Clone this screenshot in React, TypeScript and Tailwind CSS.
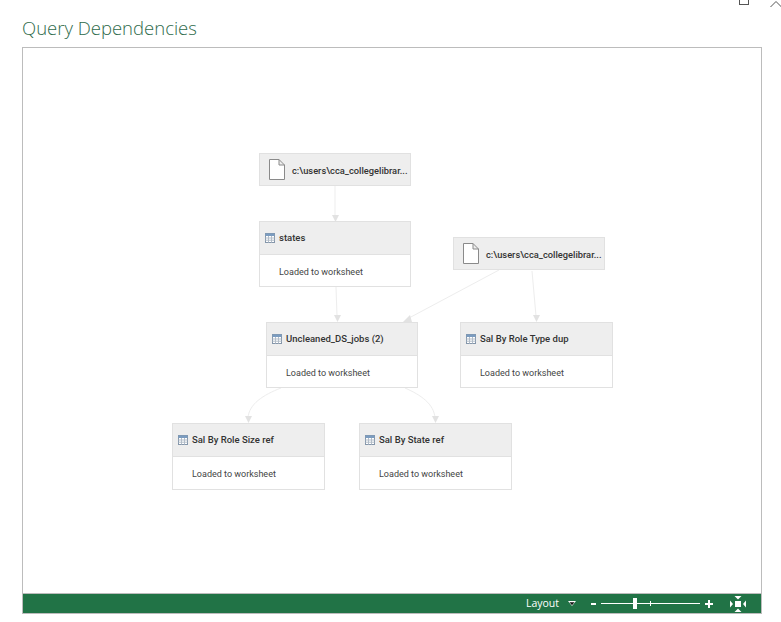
const font = { fontFamily: '"Open Sans", "Noto Sans", sans-serif' }
const nodeFont = { fontFamily: 'Roboto, "Open Sans", sans-serif' }

function TableIcon() {
  return (
    <svg width="10" height="10" viewBox="0 0 10 10" className="shrink-0">
      <rect x="0.5" y="0.5" width="9" height="9" fill="#fff" stroke="#8496aa" />
      <rect x="0.5" y="0.5" width="9" height="2.5" fill="#7b9cc0" />
      <path d="M3.5 3v6.5M6.5 3v6.5M0.5 5h9M0.5 7.2h9" stroke="#b3bdc9" strokeWidth="1" fill="none" />
    </svg>
  )
}

function FileIcon() {
  return (
    <svg width="16" height="21" viewBox="0 0 16 21" className="shrink-0">
      <path d="M0.5 0.5H10L15.5 6V20.5H0.5Z M10 0.5V6H15.5" fill="#fff" stroke="#8a8a8a" />
    </svg>
  )
}

function FileNode({ className }: { className: string }) {
  return (
    <div style={nodeFont} className={`absolute w-[152px] h-[33px] bg-[#eeeeee] border border-[#e1e1e1] flex items-center pl-[9px] ${className}`}>
      <FileIcon />
      <span className="ml-[7px] pt-[2px] text-[9.3px] font-medium text-[#333] whitespace-nowrap">c:\users\cca_collegelibrar...</span>
    </div>
  )
}

function QueryNode({ name, className, bodyClass }: { name: string; className: string; bodyClass: string }) {
  return (
    <div style={nodeFont} className={`absolute bg-white border border-[#e1e1e1] flex flex-col ${className}`}>
      <div className="h-[33px] bg-[#eeeeee] border-b border-[#e1e1e1] flex items-center pl-[5px] shrink-0">
        <TableIcon />
        <span className="ml-[4px] text-[9.5px] font-medium text-[#333] whitespace-nowrap">{name}</span>
      </div>
      <div className={`flex-1 flex items-center pl-[19px] text-[9px] text-[#444] ${bodyClass}`}>Loaded to worksheet</div>
    </div>
  )
}

function Edges() {
  return (
    <svg width="738" height="545" className="absolute left-0 top-0" fill="none" stroke="#ededed" strokeWidth="1">
      {/* lines, in canvas coordinates */}
      <path d="M312 138V168" />
      <path d="M313 239L314 268" />
      <path d="M476 222L386 270" />
      <path d="M509 223L513 268" />
      <path d="M258 340C240 347 226 356 225 370" />
      <path d="M382 340C398 347 411 356 412 370" />
      <g fill="#e2e2e2" stroke="none">
        <path d="M309 167H316L312.500 174Z" />
        <path d="M311 267H318L314.500 274Z" />
        <path d="M380 274L387 267L389 274Z" />
        <path d="M510 267H517L513.500 274Z" />
        <path d="M222 368H229L225.500 375Z" />
        <path d="M409 368H416L412.500 375Z" />
      </g>
    </svg>
  )
}

function FitIcon() {
  return (
    <svg width="18" height="16" viewBox="0 0 18 16" fill="#fff">
      <rect x="6" y="5" width="6" height="6" />
      <path d="M5.500 0H12.500L9 3.500Z M5.500 16H12.500L9 12.500Z M1 4.500V11.500L4 8Z M17 4.500V11.500L14 8Z" />
    </svg>
  )
}

export default function App() {
  return (
    <div className="relative w-[781px] h-[622px] bg-white overflow-hidden" style={font}>
      {/* window buttons, cut off by the top edge */}
      <div className="absolute left-[739px] -top-[5px] w-[10px] h-[10px] border border-[#555]" />
      <svg width="12" height="8" viewBox="0 0 12 8" className="absolute left-[770px] top-0" fill="none" stroke="#555">
        <path d="M0.500 7L6 1.500L11.500 7" />
      </svg>

      <div className="pl-[22px] pr-[20px]">
        <h1 className="h-[47px] pt-[13px] text-[18.5px] leading-[30px] font-light text-[#2f6b4c]">Query Dependencies</h1>
        <div className="w-[740px] h-[567px] border border-[#bcbcbc] flex flex-col">
          <div className="relative flex-1">
            <Edges />
            <FileNode className="left-[236px] top-[105px]" />
            <QueryNode name="states" bodyClass="pt-[4px]" className="w-[152px] h-[66px] left-[236px] top-[173px]" />
            <FileNode className="left-[430px] top-[189px]" />
            <QueryNode name="Uncleaned_DS_jobs (2)" bodyClass="pt-[4px]" className="w-[152px] h-[66px] left-[243px] top-[274px]" />
            <QueryNode name="Sal By Role Type dup" bodyClass="pt-[4px]" className="w-[153px] h-[66px] left-[437px] top-[274px]" />
            <QueryNode name="Sal By Role Size ref" bodyClass="pt-[3px]" className="w-[153px] h-[67px] left-[149px] top-[375px]" />
            <QueryNode name="Sal By State ref" bodyClass="pt-[3px]" className="w-[153px] h-[67px] left-[336px] top-[375px]" />
          </div>
          <div className="h-[20px] bg-[#217346] border-t border-[#bcbcbc] flex items-center justify-end text-white shrink-0">
            <span className="text-[10.5px] leading-none">Layout</span>
            <svg width="8" height="5" viewBox="0 0 8 5" className="ml-[9px]">
              <path d="M0 0H8L4 5Z" fill="#fff" />
              <path d="M1.500 1.200H6.500L4 4.200Z" fill="#111" />
            </svg>
            <span className="ml-[15px] w-[5px] h-[2px] bg-white" />
            <div className="relative ml-[5px] w-[99px] h-[1px] bg-white">
              <span className="absolute left-[32px] -top-[5px] w-[4px] h-[11px] bg-white" />
              <span className="absolute left-[49px] -top-[2px] w-[1px] h-[5px] bg-white" />
            </div>
            <span className="relative ml-[5px] w-[8px] h-[8px]">
              <span className="absolute left-0 top-[3px] w-[8px] h-[2px] bg-white" />
              <span className="absolute left-[3px] top-0 w-[2px] h-[8px] bg-white" />
            </span>
            <span className="ml-[16px] mr-[14px] flex">
              <FitIcon />
            </span>
          </div>
        </div>
      </div>
    </div>
  )
}
